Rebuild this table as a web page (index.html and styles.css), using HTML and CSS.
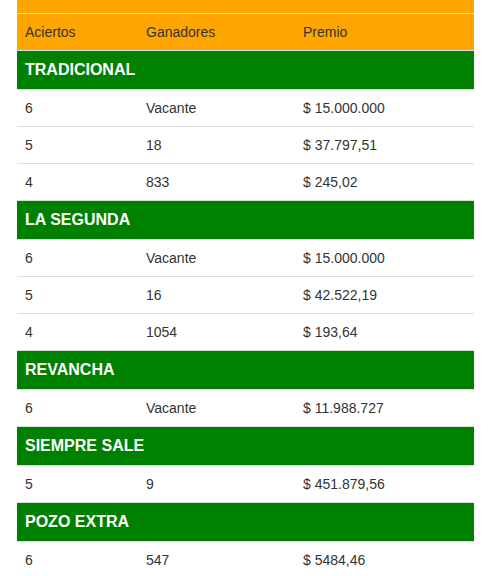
FILE: index.html
```html
<!DOCTYPE html>
<html lang="es">
<head>
<meta charset="utf-8">
<link rel="stylesheet" href="styles.css">
</head>
<body>
<div class="wrap">
<table class="results">
  <colgroup>
    <col class="c1"><col class="c2"><col class="c3">
  </colgroup>
  <thead>
    <tr class="top-strip"><th colspan="3"></th></tr>
    <tr class="head"><th>Aciertos</th><th>Ganadores</th><th>Premio</th></tr>
  </thead>
  <tbody>
    <tr class="game"><td colspan="3">TRADICIONAL</td></tr>
    <tr><td>6</td><td>Vacante</td><td>$ 15.000.000</td></tr>
    <tr><td>5</td><td>18</td><td>$ 37.797,51</td></tr>
    <tr><td>4</td><td>833</td><td>$ 245,02</td></tr>
    <tr class="game"><td colspan="3">LA SEGUNDA</td></tr>
    <tr><td>6</td><td>Vacante</td><td>$ 15.000.000</td></tr>
    <tr><td>5</td><td>16</td><td>$ 42.522,19</td></tr>
    <tr><td>4</td><td>1054</td><td>$ 193,64</td></tr>
    <tr class="game"><td colspan="3">REVANCHA</td></tr>
    <tr><td>6</td><td>Vacante</td><td>$ 11.988.727</td></tr>
    <tr class="game"><td colspan="3">SIEMPRE SALE</td></tr>
    <tr><td>5</td><td>9</td><td>$ 451.879,56</td></tr>
    <tr class="game"><td colspan="3">POZO EXTRA</td></tr>
    <tr><td>6</td><td>547</td><td>$ 5484,46</td></tr>
  </tbody>
</table>
</div>
</body>
</html>
```
FILE: styles.css
```css
html, body {
  margin: 0;
  padding: 0;
  background: #fff;
}
body {
  font-family: "Liberation Sans", Arial, sans-serif;
  font-size: 14px;
  color: #333;
}
.wrap {
  margin-left: 17px;
  width: 457px;
}
.results {
  width: 100%;
  border-collapse: collapse;
  border-spacing: 0;
  table-layout: fixed;
}
.c1 { width: 121px; }
.c2 { width: 157px; }
.c3 { width: 179px; }
.results th,
.results td {
  padding: 8px;
  line-height: 20px;
  text-align: left;
  vertical-align: top;
  border-top: 1px solid #ddd;
}
.results th {
  font-weight: normal;
}
.top-strip th {
  background: #ffa500;
  border-top: 0;
  padding: 0;
  height: 13px;
  line-height: 13px;
}
.head th {
  background: #ffa500;
  color: #333;
}
.game td {
  background: #008000;
  color: #fff;
  font-weight: bold;
  font-size: 16px;
  line-height: 22px;
}
```
